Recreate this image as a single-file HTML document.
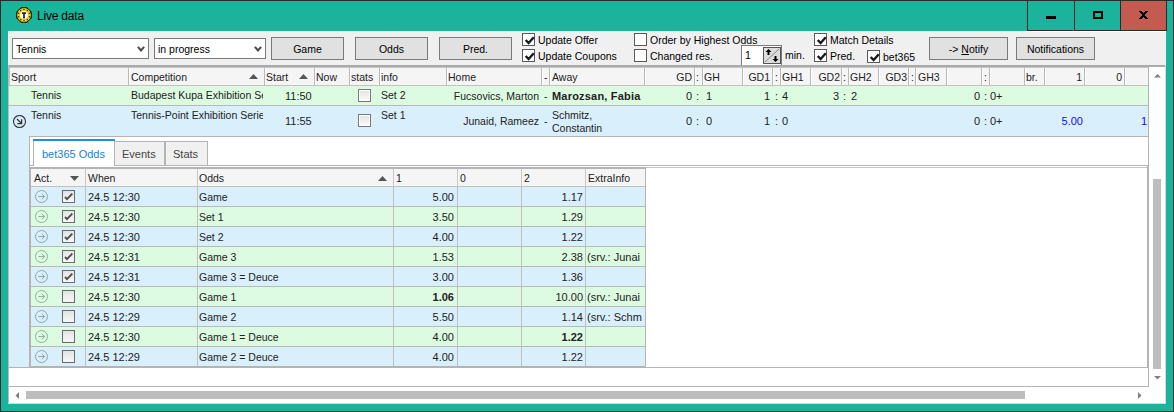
<!DOCTYPE html>
<html><head><meta charset="utf-8"><style>
html,body{margin:0;padding:0;width:1174px;height:412px;overflow:hidden;background:#2b2b2b}
.a{position:absolute}
.t{position:absolute;font-family:"Liberation Sans",sans-serif;white-space:nowrap;line-height:12px;color:#333}
u{text-decoration:underline}
</style></head><body>
<div class="a" style="left:0px;top:0px;width:1174px;height:412px;background:#2b2b2b"></div>
<div class="a" style="left:1px;top:1px;width:1172px;height:410px;background:#1bb39b"></div>
<svg class="a" style="left:16px;top:7px" width="16" height="16" viewBox="0 0 16 16">
<path d="M5 0.2H11L15.8 5V11L11 15.8H5L0.2 11V5z" fill="#111"/>
<circle cx="8" cy="8" r="6.9" fill="#f0cc00"/>
<circle cx="13.35" cy="9.65" r="0.75" fill="#3a3000"/><circle cx="11.36" cy="12.48" r="0.75" fill="#3a3000"/><circle cx="8.08" cy="13.60" r="0.75" fill="#3a3000"/><circle cx="4.77" cy="12.58" r="0.75" fill="#3a3000"/><circle cx="2.70" cy="9.81" r="0.75" fill="#3a3000"/><circle cx="2.65" cy="6.35" r="0.75" fill="#3a3000"/><circle cx="4.64" cy="3.52" r="0.75" fill="#3a3000"/><circle cx="7.92" cy="2.40" r="0.75" fill="#3a3000"/><circle cx="11.23" cy="3.42" r="0.75" fill="#3a3000"/><circle cx="13.30" cy="6.19" r="0.75" fill="#3a3000"/>
<circle cx="8" cy="8" r="3.9" fill="#fff"/>
<path d="M5.9 5.3h4.2v1.8h-1.2v4.4h-1.8v-4.4h-1.2z" fill="#2a2a2a"/>
</svg>
<div class="t" style="left:37px;top:10px;font-size:12px;color:#000;letter-spacing:-0.2px">Live data</div>
<div class="a" style="left:1027px;top:1px;width:46px;height:29px;border-left:1px solid #2b2b2b;border-bottom:1px solid #2b2b2b;box-sizing:border-box;height:30px"></div>
<div class="a" style="left:1074px;top:1px;width:46px;height:29px;border-left:1px solid #2b2b2b;border-bottom:1px solid #2b2b2b;box-sizing:border-box;height:30px"></div>
<div class="a" style="left:1120px;top:1px;width:47px;height:30px;background:#c35b51;border-left:1px solid #2b2b2b;border-right:1px solid #2b2b2b;border-bottom:1px solid #2b2b2b;box-sizing:border-box"></div>
<div class="a" style="left:1046px;top:16px;width:10px;height:3px;background:#000"></div>
<div class="a" style="left:1093px;top:11px;width:10px;height:8px;border:2px solid #000;box-sizing:border-box"></div>
<svg class="a" style="left:1139px;top:11px" width="9" height="8" viewBox="0 0 9 8" shape-rendering="crispEdges" fill="#000"><rect x="0" y="0" width="3" height="1"/><rect x="6" y="0" width="3" height="1"/><rect x="1" y="1" width="3" height="1"/><rect x="5" y="1" width="3" height="1"/><rect x="2" y="2" width="5" height="1"/><rect x="3" y="3" width="3" height="1"/><rect x="3" y="4" width="3" height="1"/><rect x="2" y="5" width="5" height="1"/><rect x="1" y="6" width="3" height="1"/><rect x="5" y="6" width="3" height="1"/><rect x="0" y="7" width="3" height="1"/><rect x="6" y="7" width="3" height="1"/></svg>
<div class="a" style="left:8px;top:31px;width:1158px;height:373px;background:#f0f0f0;border-left:1px solid #fff;border-top:1px solid #fff;box-sizing:border-box"></div>
<div class="a" style="left:12px;top:38px;width:137px;height:21px;background:#fff;border:1px solid #7a7a7a;box-sizing:border-box"></div>
<div class="t" style="left:16px;top:43px;font-size:10.5px;color:#000">Tennis</div>
<svg class="a" style="left:137px;top:46px" width="8" height="6" viewBox="0 0 8 6"><path d="M0.9 0.9L4 4.5L7.1 0.9" fill="none" stroke="#4a4a4a" stroke-width="2"/></svg>
<div class="a" style="left:154px;top:38px;width:112px;height:21px;background:#fff;border:1px solid #7a7a7a;box-sizing:border-box"></div>
<div class="t" style="left:158px;top:43px;font-size:10.5px;color:#000">in progress</div>
<svg class="a" style="left:254px;top:46px" width="8" height="6" viewBox="0 0 8 6"><path d="M0.9 0.9L4 4.5L7.1 0.9" fill="none" stroke="#4a4a4a" stroke-width="2"/></svg>
<div class="a" style="left:271px;top:37px;width:73px;height:23px;background:#e1e1e1;border:1px solid #7a7a7a;box-sizing:border-box"></div>
<div class="t" style="left:271px;width:73px;top:43px;font-size:10.5px;text-align:center;color:#000">Game</div>
<div class="a" style="left:355px;top:37px;width:73px;height:23px;background:#e1e1e1;border:1px solid #7a7a7a;box-sizing:border-box"></div>
<div class="t" style="left:355px;width:73px;top:43px;font-size:10.5px;text-align:center;color:#000">Odds</div>
<div class="a" style="left:439px;top:37px;width:73px;height:23px;background:#e1e1e1;border:1px solid #7a7a7a;box-sizing:border-box"></div>
<div class="t" style="left:439px;width:73px;top:43px;font-size:10.5px;text-align:center;color:#000">Pred.</div>
<div class="a" style="left:929px;top:37px;width:79px;height:23px;background:#e1e1e1;border:1px solid #7a7a7a;box-sizing:border-box"></div>
<div class="t" style="left:929px;width:79px;top:43px;font-size:10.5px;text-align:center;color:#000">-&gt; <u>N</u>otify</div>
<div class="a" style="left:1016px;top:37px;width:79px;height:23px;background:#e1e1e1;border:1px solid #7a7a7a;box-sizing:border-box"></div>
<div class="t" style="left:1016px;width:79px;top:43px;font-size:10.5px;text-align:center;color:#000">Notifications</div>
<div class="a" style="left:522px;top:33px;width:13px;height:13px;background:#fff;border:1px solid #5a5a5a;box-sizing:border-box"><svg width="13" height="13" viewBox="0 0 13 13" style="position:absolute;left:0;top:0"><path d="M2.7 6L5.6 9L10.8 3.3" fill="none" stroke="#1a1a1a" stroke-width="2.4"/></svg></div>
<div class="t" style="left:538px;top:34px;font-size:10.5px;color:#000">Update Offer</div>
<div class="a" style="left:522px;top:49px;width:13px;height:13px;background:#fff;border:1px solid #5a5a5a;box-sizing:border-box"><svg width="13" height="13" viewBox="0 0 13 13" style="position:absolute;left:0;top:0"><path d="M2.7 6L5.6 9L10.8 3.3" fill="none" stroke="#1a1a1a" stroke-width="2.4"/></svg></div>
<div class="t" style="left:538px;top:50px;font-size:10.5px;color:#000">Update Coupons</div>
<div class="a" style="left:634px;top:33px;width:13px;height:13px;background:#fff;border:1px solid #5a5a5a;box-sizing:border-box"></div>
<div class="t" style="left:650px;top:34px;font-size:10.5px;color:#000">Order by Highest Odds</div>
<div class="a" style="left:634px;top:49px;width:13px;height:13px;background:#fff;border:1px solid #5a5a5a;box-sizing:border-box"></div>
<div class="t" style="left:650px;top:50px;font-size:10.5px;color:#000">Changed res.</div>
<div class="a" style="left:814px;top:33px;width:13px;height:13px;background:#fff;border:1px solid #5a5a5a;box-sizing:border-box"><svg width="13" height="13" viewBox="0 0 13 13" style="position:absolute;left:0;top:0"><path d="M2.7 6L5.6 9L10.8 3.3" fill="none" stroke="#1a1a1a" stroke-width="2.4"/></svg></div>
<div class="t" style="left:830px;top:34px;font-size:10.5px;color:#000">Match Details</div>
<div class="a" style="left:814px;top:49px;width:13px;height:13px;background:#fff;border:1px solid #5a5a5a;box-sizing:border-box"><svg width="13" height="13" viewBox="0 0 13 13" style="position:absolute;left:0;top:0"><path d="M2.7 6L5.6 9L10.8 3.3" fill="none" stroke="#1a1a1a" stroke-width="2.4"/></svg></div>
<div class="t" style="left:830px;top:50px;font-size:10.5px;color:#000">Pred.</div>
<div class="a" style="left:867px;top:50px;width:13px;height:13px;background:#fff;border:1px solid #5a5a5a;box-sizing:border-box"><svg width="13" height="13" viewBox="0 0 13 13" style="position:absolute;left:0;top:0"><path d="M2.7 6L5.6 9L10.8 3.3" fill="none" stroke="#1a1a1a" stroke-width="2.4"/></svg></div>
<div class="t" style="left:883px;top:51px;font-size:10.5px;color:#000">bet365</div>
<div class="a" style="left:741px;top:45px;width:41px;height:21px;background:#fff;border:1px solid #7a7a7a;box-sizing:border-box"></div>
<div class="t" style="left:745px;top:49px;font-size:10.5px;color:#000">1</div>
<svg class="a" style="left:763px;top:47px" width="18" height="17" viewBox="0 0 18 17">
<rect x="0.5" y="0.5" width="17" height="16" fill="#dcdcdc" stroke="#555"/>
<path d="M2 15L16 2" stroke="#888" stroke-width="1"/>
<path d="M5.5 2L8.5 5H6.5V8H4.5V5H2.5z" fill="#000"/>
<path d="M12.5 15L9.5 12H11.5V9H13.5V12H15.5z" fill="#000"/>
</svg>
<div class="t" style="left:785px;top:49px;font-size:10.5px;color:#000">min.</div>
<div class="a" style="left:8px;top:65px;width:1158px;height:2px;background:#ababab"></div>
<div class="a" style="left:8px;top:65px;width:1px;height:339px;background:#c4baba"></div>
<div class="a" style="left:9px;top:67px;width:1157px;height:337px;background:#fff"></div>
<div class="a" style="left:9px;top:67px;width:1157px;height:1px;background:#c6c6c6"></div>
<div class="a" style="left:9px;top:68px;width:1140px;height:17px;background:#f5f5f5"></div>
<div class="a" style="left:9px;top:85px;width:1140px;height:1px;background:#c2c2c2"></div>
<div class="a" style="left:128px;top:68px;width:1px;height:17px;background:#b9b9b9"></div>
<div class="a" style="left:129px;top:68px;width:1px;height:17px;background:#fff"></div>
<div class="a" style="left:264px;top:68px;width:1px;height:17px;background:#b9b9b9"></div>
<div class="a" style="left:265px;top:68px;width:1px;height:17px;background:#fff"></div>
<div class="a" style="left:314px;top:68px;width:1px;height:17px;background:#b9b9b9"></div>
<div class="a" style="left:315px;top:68px;width:1px;height:17px;background:#fff"></div>
<div class="a" style="left:349px;top:68px;width:1px;height:17px;background:#b9b9b9"></div>
<div class="a" style="left:350px;top:68px;width:1px;height:17px;background:#fff"></div>
<div class="a" style="left:379px;top:68px;width:1px;height:17px;background:#b9b9b9"></div>
<div class="a" style="left:380px;top:68px;width:1px;height:17px;background:#fff"></div>
<div class="a" style="left:446px;top:68px;width:1px;height:17px;background:#b9b9b9"></div>
<div class="a" style="left:447px;top:68px;width:1px;height:17px;background:#fff"></div>
<div class="a" style="left:541px;top:68px;width:1px;height:17px;background:#b9b9b9"></div>
<div class="a" style="left:542px;top:68px;width:1px;height:17px;background:#fff"></div>
<div class="a" style="left:549px;top:68px;width:1px;height:17px;background:#b9b9b9"></div>
<div class="a" style="left:550px;top:68px;width:1px;height:17px;background:#fff"></div>
<div class="a" style="left:644px;top:68px;width:1px;height:17px;background:#b9b9b9"></div>
<div class="a" style="left:645px;top:68px;width:1px;height:17px;background:#fff"></div>
<div class="a" style="left:694px;top:68px;width:1px;height:17px;background:#b9b9b9"></div>
<div class="a" style="left:695px;top:68px;width:1px;height:17px;background:#fff"></div>
<div class="a" style="left:702px;top:68px;width:1px;height:17px;background:#b9b9b9"></div>
<div class="a" style="left:703px;top:68px;width:1px;height:17px;background:#fff"></div>
<div class="a" style="left:742px;top:68px;width:1px;height:17px;background:#b9b9b9"></div>
<div class="a" style="left:743px;top:68px;width:1px;height:17px;background:#fff"></div>
<div class="a" style="left:772px;top:68px;width:1px;height:17px;background:#b9b9b9"></div>
<div class="a" style="left:773px;top:68px;width:1px;height:17px;background:#fff"></div>
<div class="a" style="left:780px;top:68px;width:1px;height:17px;background:#b9b9b9"></div>
<div class="a" style="left:781px;top:68px;width:1px;height:17px;background:#fff"></div>
<div class="a" style="left:810px;top:68px;width:1px;height:17px;background:#b9b9b9"></div>
<div class="a" style="left:811px;top:68px;width:1px;height:17px;background:#fff"></div>
<div class="a" style="left:841px;top:68px;width:1px;height:17px;background:#b9b9b9"></div>
<div class="a" style="left:842px;top:68px;width:1px;height:17px;background:#fff"></div>
<div class="a" style="left:848px;top:68px;width:1px;height:17px;background:#b9b9b9"></div>
<div class="a" style="left:849px;top:68px;width:1px;height:17px;background:#fff"></div>
<div class="a" style="left:878px;top:68px;width:1px;height:17px;background:#b9b9b9"></div>
<div class="a" style="left:879px;top:68px;width:1px;height:17px;background:#fff"></div>
<div class="a" style="left:908px;top:68px;width:1px;height:17px;background:#b9b9b9"></div>
<div class="a" style="left:909px;top:68px;width:1px;height:17px;background:#fff"></div>
<div class="a" style="left:915px;top:68px;width:1px;height:17px;background:#b9b9b9"></div>
<div class="a" style="left:916px;top:68px;width:1px;height:17px;background:#fff"></div>
<div class="a" style="left:946px;top:68px;width:1px;height:17px;background:#b9b9b9"></div>
<div class="a" style="left:947px;top:68px;width:1px;height:17px;background:#fff"></div>
<div class="a" style="left:981px;top:68px;width:1px;height:17px;background:#b9b9b9"></div>
<div class="a" style="left:982px;top:68px;width:1px;height:17px;background:#fff"></div>
<div class="a" style="left:989px;top:68px;width:1px;height:17px;background:#b9b9b9"></div>
<div class="a" style="left:990px;top:68px;width:1px;height:17px;background:#fff"></div>
<div class="a" style="left:1024px;top:68px;width:1px;height:17px;background:#b9b9b9"></div>
<div class="a" style="left:1025px;top:68px;width:1px;height:17px;background:#fff"></div>
<div class="a" style="left:1044px;top:68px;width:1px;height:17px;background:#b9b9b9"></div>
<div class="a" style="left:1045px;top:68px;width:1px;height:17px;background:#fff"></div>
<div class="a" style="left:1084px;top:68px;width:1px;height:17px;background:#b9b9b9"></div>
<div class="a" style="left:1085px;top:68px;width:1px;height:17px;background:#fff"></div>
<div class="a" style="left:1124px;top:68px;width:1px;height:17px;background:#b9b9b9"></div>
<div class="a" style="left:1125px;top:68px;width:1px;height:17px;background:#fff"></div>
<div class="a" style="left:1148px;top:68px;width:1px;height:18px;background:#b9b9b9"></div>
<div class="t" style="left:11px;top:71px;font-size:10.5px;color:#222">Sport</div>
<div class="a" style="left:9px;top:67px;width:1px;height:19px;background:#c4c4c4"></div>
<div class="t" style="left:131px;top:71px;font-size:10.5px;color:#222">Competition</div>
<div class="t" style="left:266px;top:71px;font-size:10.5px;color:#222">Start</div>
<div class="t" style="left:316px;top:71px;font-size:10.5px;color:#222">Now</div>
<div class="t" style="left:351px;top:71px;font-size:10.5px;color:#222">stats</div>
<div class="t" style="left:381px;top:71px;font-size:10.5px;color:#222">info</div>
<div class="t" style="left:448px;top:71px;font-size:10.5px;color:#222">Home</div>
<div class="t" style="left:544px;top:71px;font-size:10.5px;color:#222">-</div>
<div class="t" style="left:552px;top:71px;font-size:10.5px;color:#222">Away</div>
<div class="t" style="right:482px;top:71px;font-size:10.5px;text-align:right;color:#222">GD</div>
<div class="t" style="left:696px;top:71px;font-size:10.5px;color:#222">:</div>
<div class="t" style="left:704px;top:71px;font-size:10.5px;color:#222">GH</div>
<div class="t" style="right:404px;top:71px;font-size:10.5px;text-align:right;color:#222">GD1</div>
<div class="t" style="left:775px;top:71px;font-size:10.5px;color:#222">:</div>
<div class="t" style="left:782px;top:71px;font-size:10.5px;color:#222">GH1</div>
<div class="t" style="right:334px;top:71px;font-size:10.5px;text-align:right;color:#222">GD2</div>
<div class="t" style="left:843px;top:71px;font-size:10.5px;color:#222">:</div>
<div class="t" style="left:850px;top:71px;font-size:10.5px;color:#222">GH2</div>
<div class="t" style="right:267px;top:71px;font-size:10.5px;text-align:right;color:#222">GD3</div>
<div class="t" style="left:911px;top:71px;font-size:10.5px;color:#222">:</div>
<div class="t" style="left:918px;top:71px;font-size:10.5px;color:#222">GH3</div>
<div class="t" style="left:984px;top:71px;font-size:10.5px;color:#222">:</div>
<div class="t" style="left:1026px;top:71px;font-size:10.5px;color:#222">br.</div>
<div class="t" style="right:92px;top:71px;font-size:10.5px;text-align:right;color:#222">1</div>
<div class="t" style="right:52px;top:71px;font-size:10.5px;text-align:right;color:#222">0</div>
<svg class="a" style="left:249px;top:74px" width="9" height="5" viewBox="0 0 9 5"><path d="M0 5L4.5 0L9 5z" fill="#555"/></svg>
<svg class="a" style="left:299px;top:74px" width="9" height="5" viewBox="0 0 9 5"><path d="M0 5L4.5 0L9 5z" fill="#555"/></svg>
<div class="a" style="left:9px;top:86px;width:1140px;height:19px;background:#dcfbe1"></div>
<div class="a" style="left:9px;top:105px;width:1140px;height:1px;background:#b9b9b9"></div>
<div class="a" style="left:9px;top:106px;width:1140px;height:30px;background:#d9f0fc"></div>
<div class="a" style="left:29px;top:136px;width:1120px;height:1px;background:#b4b4b4"></div>
<div class="a" style="left:9px;top:136px;width:20px;height:231px;background:#d9f0fc"></div>
<div class="a" style="left:1148px;top:67px;width:1px;height:320px;background:#b4b4b4"></div>
<div class="a" style="left:9px;top:386px;width:1140px;height:1px;background:#b4b4b4"></div>
<div class="t" style="left:31px;top:89px;font-size:10.5px;color:#222">Tennis</div>
<div class="t" style="left:131px;top:89px;width:132px;overflow:hidden;font-size:10.5px;color:#222">Budapest Kupa Exhibition Series</div>
<div class="t" style="left:285px;top:90px;font-size:11px;color:#222">11:50</div>
<div class="t" style="left:381px;top:89px;font-size:10.5px;color:#222">Set 2</div>
<div class="t" style="right:635px;top:90px;font-size:10.5px;text-align:right;color:#222">Fucsovics, Marton</div>
<div class="t" style="left:544px;top:90px;font-size:10.5px;color:#222">-</div>
<div class="t" style="left:552px;top:90px;width:91px;overflow:hidden;font-size:11px;color:#222;font-weight:bold;letter-spacing:0.2px">Marozsan, Fabia</div>
<div class="t" style="right:482px;top:90px;font-size:11px;text-align:right;color:#222">0</div>
<div class="t" style="left:696px;top:90px;font-size:11px;color:#222">:</div>
<div class="t" style="left:706px;top:90px;font-size:11px;color:#222">1</div>
<div class="t" style="right:404px;top:90px;font-size:11px;text-align:right;color:#222">1</div>
<div class="t" style="left:775px;top:90px;font-size:11px;color:#222">:</div>
<div class="t" style="left:782px;top:90px;font-size:11px;color:#222">4</div>
<div class="t" style="right:335px;top:90px;font-size:11px;text-align:right;color:#222">3</div>
<div class="t" style="left:843px;top:90px;font-size:11px;color:#222">:</div>
<div class="t" style="left:851px;top:90px;font-size:11px;color:#222">2</div>
<div class="t" style="right:194px;top:90px;font-size:11px;text-align:right;color:#222">0</div>
<div class="t" style="left:984px;top:90px;font-size:11px;color:#222">:</div>
<div class="t" style="left:990px;top:90px;font-size:11px;color:#222">0+</div>
<div class="t" style="left:31px;top:109px;font-size:10.5px;color:#222">Tennis</div>
<div class="t" style="left:131px;top:109px;width:132px;overflow:hidden;font-size:10.5px;color:#222">Tennis-Point Exhibition Series</div>
<div class="t" style="left:285px;top:115px;font-size:11px;color:#222">11:55</div>
<div class="t" style="left:381px;top:109px;font-size:10.5px;color:#222">Set 1</div>
<div class="t" style="right:635px;top:115px;font-size:10.5px;text-align:right;color:#222">Junaid, Rameez</div>
<div class="t" style="left:544px;top:115px;font-size:10.5px;color:#222">-</div>
<div class="t" style="left:552px;top:109px;font-size:10.5px;color:#222">Schmitz,</div>
<div class="t" style="left:552px;top:122px;font-size:10.5px;color:#222">Constantin</div>
<div class="t" style="right:482px;top:115px;font-size:11px;text-align:right;color:#222">0</div>
<div class="t" style="left:696px;top:115px;font-size:11px;color:#222">:</div>
<div class="t" style="left:706px;top:115px;font-size:11px;color:#222">0</div>
<div class="t" style="right:404px;top:115px;font-size:11px;text-align:right;color:#222">1</div>
<div class="t" style="left:775px;top:115px;font-size:11px;color:#222">:</div>
<div class="t" style="left:782px;top:115px;font-size:11px;color:#222">0</div>
<div class="t" style="right:194px;top:115px;font-size:11px;text-align:right;color:#222">0</div>
<div class="t" style="left:984px;top:115px;font-size:11px;color:#222">:</div>
<div class="t" style="left:990px;top:115px;font-size:11px;color:#222">0+</div>
<div class="t" style="right:91px;top:115px;font-size:11px;text-align:right;color:#1010e0">5.00</div>
<div class="t" style="left:1141px;top:115px;width:7px;overflow:hidden;font-size:11px;color:#1010e0">1.17</div>
<div class="a" style="left:358px;top:89px;width:13px;height:13px;border:1px solid #787878;box-sizing:border-box;background:linear-gradient(#e2e2e2,#fcfcfc);box-shadow:inset 0 0 0 1px #fff"></div>
<div class="a" style="left:358px;top:114px;width:13px;height:13px;border:1px solid #787878;box-sizing:border-box;background:linear-gradient(#e2e2e2,#fcfcfc);box-shadow:inset 0 0 0 1px #fff"></div>
<svg class="a" style="left:13px;top:115px" width="14" height="14" viewBox="0 0 14 14">
<circle cx="6.5" cy="6.5" r="6" fill="none" stroke="#333" stroke-width="1.1"/>
<path d="M4 4L8.6 8.6M4.3 8.6H8.6V4.3" fill="none" stroke="#333" stroke-width="1.3"/>
</svg>
<div class="a" style="left:29px;top:136px;width:1px;height:231px;background:#b4b4b4"></div>
<div class="a" style="left:30px;top:137px;width:1118px;height:230px;background:#fff"></div>
<div class="a" style="left:29px;top:165px;width:5px;height:1px;background:#b4b4b4"></div>
<div class="a" style="left:33px;top:139px;width:82px;height:27px;background:#fff;border-left:1px solid #b4b4b4;border-right:1px solid #b4b4b4;box-sizing:border-box"></div>
<div class="a" style="left:33px;top:139px;width:82px;height:2px;background:#1e8fe6"></div>
<div class="t" style="left:42px;top:148px;font-size:11px;color:#1682d8">bet365 Odds</div>
<div class="a" style="left:114px;top:141px;width:51px;height:25px;background:#f0f0f0;border:1px solid #b4b4b4;box-sizing:border-box"></div>
<div class="a" style="left:165px;top:141px;width:43px;height:25px;background:#f0f0f0;border:1px solid #b4b4b4;box-sizing:border-box"></div>
<div class="t" style="left:122px;top:148px;font-size:11px;color:#444">Events</div>
<div class="t" style="left:173px;top:148px;font-size:11px;color:#444">Stats</div>
<div class="a" style="left:114px;top:165px;width:1034px;height:1px;background:#b4b4b4"></div>
<div class="a" style="left:1147px;top:165px;width:1px;height:202px;background:#b4b4b4"></div>
<div class="a" style="left:9px;top:367px;width:1140px;height:1px;background:#b4b4b4"></div>
<div class="a" style="left:30px;top:167px;width:1117px;height:1px;background:#c4c4c4"></div>
<div class="a" style="left:30px;top:167px;width:616px;height:2px;background:#b4b4b4"></div>
<div class="a" style="left:30px;top:167px;width:1px;height:200px;background:#b4b4b4"></div>
<div class="a" style="left:645px;top:167px;width:1px;height:200px;background:#b4b4b4"></div>
<div class="a" style="left:31px;top:169px;width:614px;height:17px;background:#f5f5f5"></div>
<div class="a" style="left:31px;top:186px;width:614px;height:1px;background:#c0c0c0"></div>
<div class="a" style="left:85px;top:169px;width:1px;height:198px;background:#c8c8c8"></div>
<div class="a" style="left:197px;top:169px;width:1px;height:198px;background:#c8c8c8"></div>
<div class="a" style="left:393px;top:169px;width:1px;height:198px;background:#c8c8c8"></div>
<div class="a" style="left:457px;top:169px;width:1px;height:198px;background:#c8c8c8"></div>
<div class="a" style="left:521px;top:169px;width:1px;height:198px;background:#c8c8c8"></div>
<div class="a" style="left:585px;top:169px;width:1px;height:198px;background:#c8c8c8"></div>
<div class="t" style="left:34px;top:172px;font-size:10.5px;color:#222">Act.</div>
<svg class="a" style="left:70px;top:176px" width="9" height="5" viewBox="0 0 9 5"><path d="M0 0L4.5 5L9 0z" fill="#555"/></svg>
<div class="t" style="left:88px;top:172px;font-size:10.5px;color:#222">When</div>
<div class="t" style="left:199px;top:172px;font-size:10.5px;color:#222">Odds</div>
<svg class="a" style="left:378px;top:176px" width="9" height="5" viewBox="0 0 9 5"><path d="M0 5L4.5 0L9 5z" fill="#555"/></svg>
<div class="t" style="left:396px;top:172px;font-size:10.5px;color:#222">1</div>
<div class="t" style="left:460px;top:172px;font-size:10.5px;color:#222">0</div>
<div class="t" style="left:524px;top:172px;font-size:10.5px;color:#222">2</div>
<div class="t" style="left:588px;top:172px;font-size:10.5px;color:#222">ExtraInfo</div>
<div class="a" style="left:31px;top:187px;width:614px;height:19px;background:#d9f0fc"></div>
<div class="a" style="left:31px;top:206px;width:614px;height:1px;background:#b9b9b9"></div>
<div class="a" style="left:85px;top:187px;width:1px;height:19px;background:#c0c0c0"></div>
<div class="a" style="left:197px;top:187px;width:1px;height:19px;background:#c0c0c0"></div>
<div class="a" style="left:393px;top:187px;width:1px;height:19px;background:#c0c0c0"></div>
<div class="a" style="left:457px;top:187px;width:1px;height:19px;background:#c0c0c0"></div>
<div class="a" style="left:521px;top:187px;width:1px;height:19px;background:#c0c0c0"></div>
<div class="a" style="left:585px;top:187px;width:1px;height:19px;background:#c0c0c0"></div>
<svg class="a" style="left:35px;top:190px" width="14" height="14" viewBox="0 0 14 14">
<circle cx="6.5" cy="6.5" r="6" fill="none" stroke="#8fa3aa" stroke-width="1"/>
<path d="M3.3 6.5H9.6M6.8 3.7L9.6 6.5L6.8 9.3" fill="none" stroke="#8fa3aa" stroke-width="1"/>
</svg>
<div class="a" style="left:62px;top:190px;width:13px;height:13px;border:1px solid #6a6a6a;box-sizing:border-box;background:linear-gradient(#e3e3e3,#f7f7f7)"><svg width="13" height="13" viewBox="0 0 13 13" style="position:absolute;left:-1px;top:-1px"><path d="M3 7L5 9.1L10.3 3.6" fill="none" stroke="#4e4e4e" stroke-width="1.9"/></svg></div>
<div class="t" style="left:88px;top:191px;font-size:11px;color:#222">24.5 12:30</div>
<div class="t" style="left:199px;top:191px;font-size:10.5px;color:#222">Game</div>
<div class="t" style="right:720px;top:191px;font-size:11px;text-align:right;color:#222">5.00</div>
<div class="t" style="right:591px;top:191px;font-size:11px;text-align:right;color:#222">1.17</div>
<div class="a" style="left:31px;top:207px;width:614px;height:19px;background:#dcfbe1"></div>
<div class="a" style="left:31px;top:226px;width:614px;height:1px;background:#b9b9b9"></div>
<div class="a" style="left:85px;top:207px;width:1px;height:19px;background:#c0c0c0"></div>
<div class="a" style="left:197px;top:207px;width:1px;height:19px;background:#c0c0c0"></div>
<div class="a" style="left:393px;top:207px;width:1px;height:19px;background:#c0c0c0"></div>
<div class="a" style="left:457px;top:207px;width:1px;height:19px;background:#c0c0c0"></div>
<div class="a" style="left:521px;top:207px;width:1px;height:19px;background:#c0c0c0"></div>
<div class="a" style="left:585px;top:207px;width:1px;height:19px;background:#c0c0c0"></div>
<svg class="a" style="left:35px;top:210px" width="14" height="14" viewBox="0 0 14 14">
<circle cx="6.5" cy="6.5" r="6" fill="none" stroke="#8fae96" stroke-width="1"/>
<path d="M3.3 6.5H9.6M6.8 3.7L9.6 6.5L6.8 9.3" fill="none" stroke="#8fae96" stroke-width="1"/>
</svg>
<div class="a" style="left:62px;top:210px;width:13px;height:13px;border:1px solid #6a6a6a;box-sizing:border-box;background:linear-gradient(#e3e3e3,#f7f7f7)"><svg width="13" height="13" viewBox="0 0 13 13" style="position:absolute;left:-1px;top:-1px"><path d="M3 7L5 9.1L10.3 3.6" fill="none" stroke="#4e4e4e" stroke-width="1.9"/></svg></div>
<div class="t" style="left:88px;top:211px;font-size:11px;color:#222">24.5 12:30</div>
<div class="t" style="left:199px;top:211px;font-size:10.5px;color:#222">Set 1</div>
<div class="t" style="right:720px;top:211px;font-size:11px;text-align:right;color:#222">3.50</div>
<div class="t" style="right:591px;top:211px;font-size:11px;text-align:right;color:#222">1.29</div>
<div class="a" style="left:31px;top:227px;width:614px;height:19px;background:#d9f0fc"></div>
<div class="a" style="left:31px;top:246px;width:614px;height:1px;background:#b9b9b9"></div>
<div class="a" style="left:85px;top:227px;width:1px;height:19px;background:#c0c0c0"></div>
<div class="a" style="left:197px;top:227px;width:1px;height:19px;background:#c0c0c0"></div>
<div class="a" style="left:393px;top:227px;width:1px;height:19px;background:#c0c0c0"></div>
<div class="a" style="left:457px;top:227px;width:1px;height:19px;background:#c0c0c0"></div>
<div class="a" style="left:521px;top:227px;width:1px;height:19px;background:#c0c0c0"></div>
<div class="a" style="left:585px;top:227px;width:1px;height:19px;background:#c0c0c0"></div>
<svg class="a" style="left:35px;top:230px" width="14" height="14" viewBox="0 0 14 14">
<circle cx="6.5" cy="6.5" r="6" fill="none" stroke="#8fa3aa" stroke-width="1"/>
<path d="M3.3 6.5H9.6M6.8 3.7L9.6 6.5L6.8 9.3" fill="none" stroke="#8fa3aa" stroke-width="1"/>
</svg>
<div class="a" style="left:62px;top:230px;width:13px;height:13px;border:1px solid #6a6a6a;box-sizing:border-box;background:linear-gradient(#e3e3e3,#f7f7f7)"><svg width="13" height="13" viewBox="0 0 13 13" style="position:absolute;left:-1px;top:-1px"><path d="M3 7L5 9.1L10.3 3.6" fill="none" stroke="#4e4e4e" stroke-width="1.9"/></svg></div>
<div class="t" style="left:88px;top:231px;font-size:11px;color:#222">24.5 12:30</div>
<div class="t" style="left:199px;top:231px;font-size:10.5px;color:#222">Set 2</div>
<div class="t" style="right:720px;top:231px;font-size:11px;text-align:right;color:#222">4.00</div>
<div class="t" style="right:591px;top:231px;font-size:11px;text-align:right;color:#222">1.22</div>
<div class="a" style="left:31px;top:247px;width:614px;height:19px;background:#dcfbe1"></div>
<div class="a" style="left:31px;top:266px;width:614px;height:1px;background:#b9b9b9"></div>
<div class="a" style="left:85px;top:247px;width:1px;height:19px;background:#c0c0c0"></div>
<div class="a" style="left:197px;top:247px;width:1px;height:19px;background:#c0c0c0"></div>
<div class="a" style="left:393px;top:247px;width:1px;height:19px;background:#c0c0c0"></div>
<div class="a" style="left:457px;top:247px;width:1px;height:19px;background:#c0c0c0"></div>
<div class="a" style="left:521px;top:247px;width:1px;height:19px;background:#c0c0c0"></div>
<div class="a" style="left:585px;top:247px;width:1px;height:19px;background:#c0c0c0"></div>
<svg class="a" style="left:35px;top:250px" width="14" height="14" viewBox="0 0 14 14">
<circle cx="6.5" cy="6.5" r="6" fill="none" stroke="#8fae96" stroke-width="1"/>
<path d="M3.3 6.5H9.6M6.8 3.7L9.6 6.5L6.8 9.3" fill="none" stroke="#8fae96" stroke-width="1"/>
</svg>
<div class="a" style="left:62px;top:250px;width:13px;height:13px;border:1px solid #6a6a6a;box-sizing:border-box;background:linear-gradient(#e3e3e3,#f7f7f7)"><svg width="13" height="13" viewBox="0 0 13 13" style="position:absolute;left:-1px;top:-1px"><path d="M3 7L5 9.1L10.3 3.6" fill="none" stroke="#4e4e4e" stroke-width="1.9"/></svg></div>
<div class="t" style="left:88px;top:251px;font-size:11px;color:#222">24.5 12:31</div>
<div class="t" style="left:199px;top:251px;font-size:10.5px;color:#222">Game 3</div>
<div class="t" style="right:720px;top:251px;font-size:11px;text-align:right;color:#222">1.53</div>
<div class="t" style="right:591px;top:251px;font-size:11px;text-align:right;color:#222">2.38</div>
<div class="t" style="left:587px;top:251px;width:58px;overflow:hidden;font-size:11px;color:#222">(srv.: Junai</div>
<div class="a" style="left:31px;top:267px;width:614px;height:19px;background:#d9f0fc"></div>
<div class="a" style="left:31px;top:286px;width:614px;height:1px;background:#b9b9b9"></div>
<div class="a" style="left:85px;top:267px;width:1px;height:19px;background:#c0c0c0"></div>
<div class="a" style="left:197px;top:267px;width:1px;height:19px;background:#c0c0c0"></div>
<div class="a" style="left:393px;top:267px;width:1px;height:19px;background:#c0c0c0"></div>
<div class="a" style="left:457px;top:267px;width:1px;height:19px;background:#c0c0c0"></div>
<div class="a" style="left:521px;top:267px;width:1px;height:19px;background:#c0c0c0"></div>
<div class="a" style="left:585px;top:267px;width:1px;height:19px;background:#c0c0c0"></div>
<svg class="a" style="left:35px;top:270px" width="14" height="14" viewBox="0 0 14 14">
<circle cx="6.5" cy="6.5" r="6" fill="none" stroke="#8fa3aa" stroke-width="1"/>
<path d="M3.3 6.5H9.6M6.8 3.7L9.6 6.5L6.8 9.3" fill="none" stroke="#8fa3aa" stroke-width="1"/>
</svg>
<div class="a" style="left:62px;top:270px;width:13px;height:13px;border:1px solid #6a6a6a;box-sizing:border-box;background:linear-gradient(#e3e3e3,#f7f7f7)"><svg width="13" height="13" viewBox="0 0 13 13" style="position:absolute;left:-1px;top:-1px"><path d="M3 7L5 9.1L10.3 3.6" fill="none" stroke="#4e4e4e" stroke-width="1.9"/></svg></div>
<div class="t" style="left:88px;top:271px;font-size:11px;color:#222">24.5 12:31</div>
<div class="t" style="left:199px;top:271px;font-size:10.5px;color:#222">Game 3 = Deuce</div>
<div class="t" style="right:720px;top:271px;font-size:11px;text-align:right;color:#222">3.00</div>
<div class="t" style="right:591px;top:271px;font-size:11px;text-align:right;color:#222">1.36</div>
<div class="a" style="left:31px;top:287px;width:614px;height:19px;background:#dcfbe1"></div>
<div class="a" style="left:31px;top:306px;width:614px;height:1px;background:#b9b9b9"></div>
<div class="a" style="left:85px;top:287px;width:1px;height:19px;background:#c0c0c0"></div>
<div class="a" style="left:197px;top:287px;width:1px;height:19px;background:#c0c0c0"></div>
<div class="a" style="left:393px;top:287px;width:1px;height:19px;background:#c0c0c0"></div>
<div class="a" style="left:457px;top:287px;width:1px;height:19px;background:#c0c0c0"></div>
<div class="a" style="left:521px;top:287px;width:1px;height:19px;background:#c0c0c0"></div>
<div class="a" style="left:585px;top:287px;width:1px;height:19px;background:#c0c0c0"></div>
<svg class="a" style="left:35px;top:290px" width="14" height="14" viewBox="0 0 14 14">
<circle cx="6.5" cy="6.5" r="6" fill="none" stroke="#8fae96" stroke-width="1"/>
<path d="M3.3 6.5H9.6M6.8 3.7L9.6 6.5L6.8 9.3" fill="none" stroke="#8fae96" stroke-width="1"/>
</svg>
<div class="a" style="left:62px;top:290px;width:13px;height:13px;border:1px solid #6a6a6a;box-sizing:border-box;background:linear-gradient(#e3e3e3,#f7f7f7)"></div>
<div class="t" style="left:88px;top:291px;font-size:11px;color:#222">24.5 12:30</div>
<div class="t" style="left:199px;top:291px;font-size:10.5px;color:#222">Game 1</div>
<div class="t" style="right:720px;top:291px;font-size:11px;text-align:right;color:#222;font-weight:bold">1.06</div>
<div class="t" style="right:591px;top:291px;font-size:11px;text-align:right;color:#222">10.00</div>
<div class="t" style="left:587px;top:291px;width:58px;overflow:hidden;font-size:11px;color:#222">(srv.: Junai</div>
<div class="a" style="left:31px;top:307px;width:614px;height:19px;background:#d9f0fc"></div>
<div class="a" style="left:31px;top:326px;width:614px;height:1px;background:#b9b9b9"></div>
<div class="a" style="left:85px;top:307px;width:1px;height:19px;background:#c0c0c0"></div>
<div class="a" style="left:197px;top:307px;width:1px;height:19px;background:#c0c0c0"></div>
<div class="a" style="left:393px;top:307px;width:1px;height:19px;background:#c0c0c0"></div>
<div class="a" style="left:457px;top:307px;width:1px;height:19px;background:#c0c0c0"></div>
<div class="a" style="left:521px;top:307px;width:1px;height:19px;background:#c0c0c0"></div>
<div class="a" style="left:585px;top:307px;width:1px;height:19px;background:#c0c0c0"></div>
<svg class="a" style="left:35px;top:310px" width="14" height="14" viewBox="0 0 14 14">
<circle cx="6.5" cy="6.5" r="6" fill="none" stroke="#8fa3aa" stroke-width="1"/>
<path d="M3.3 6.5H9.6M6.8 3.7L9.6 6.5L6.8 9.3" fill="none" stroke="#8fa3aa" stroke-width="1"/>
</svg>
<div class="a" style="left:62px;top:310px;width:13px;height:13px;border:1px solid #6a6a6a;box-sizing:border-box;background:linear-gradient(#e3e3e3,#f7f7f7)"></div>
<div class="t" style="left:88px;top:311px;font-size:11px;color:#222">24.5 12:29</div>
<div class="t" style="left:199px;top:311px;font-size:10.5px;color:#222">Game 2</div>
<div class="t" style="right:720px;top:311px;font-size:11px;text-align:right;color:#222">5.50</div>
<div class="t" style="right:591px;top:311px;font-size:11px;text-align:right;color:#222">1.14</div>
<div class="t" style="left:587px;top:311px;width:58px;overflow:hidden;font-size:11px;color:#222">(srv.: Schm</div>
<div class="a" style="left:31px;top:327px;width:614px;height:19px;background:#dcfbe1"></div>
<div class="a" style="left:31px;top:346px;width:614px;height:1px;background:#b9b9b9"></div>
<div class="a" style="left:85px;top:327px;width:1px;height:19px;background:#c0c0c0"></div>
<div class="a" style="left:197px;top:327px;width:1px;height:19px;background:#c0c0c0"></div>
<div class="a" style="left:393px;top:327px;width:1px;height:19px;background:#c0c0c0"></div>
<div class="a" style="left:457px;top:327px;width:1px;height:19px;background:#c0c0c0"></div>
<div class="a" style="left:521px;top:327px;width:1px;height:19px;background:#c0c0c0"></div>
<div class="a" style="left:585px;top:327px;width:1px;height:19px;background:#c0c0c0"></div>
<svg class="a" style="left:35px;top:330px" width="14" height="14" viewBox="0 0 14 14">
<circle cx="6.5" cy="6.5" r="6" fill="none" stroke="#8fae96" stroke-width="1"/>
<path d="M3.3 6.5H9.6M6.8 3.7L9.6 6.5L6.8 9.3" fill="none" stroke="#8fae96" stroke-width="1"/>
</svg>
<div class="a" style="left:62px;top:330px;width:13px;height:13px;border:1px solid #6a6a6a;box-sizing:border-box;background:linear-gradient(#e3e3e3,#f7f7f7)"></div>
<div class="t" style="left:88px;top:331px;font-size:11px;color:#222">24.5 12:30</div>
<div class="t" style="left:199px;top:331px;font-size:10.5px;color:#222">Game 1 = Deuce</div>
<div class="t" style="right:720px;top:331px;font-size:11px;text-align:right;color:#222">4.00</div>
<div class="t" style="right:591px;top:331px;font-size:11px;text-align:right;color:#222;font-weight:bold">1.22</div>
<div class="a" style="left:31px;top:347px;width:614px;height:19px;background:#d9f0fc"></div>
<div class="a" style="left:31px;top:366px;width:614px;height:1px;background:#b9b9b9"></div>
<div class="a" style="left:85px;top:347px;width:1px;height:19px;background:#c0c0c0"></div>
<div class="a" style="left:197px;top:347px;width:1px;height:19px;background:#c0c0c0"></div>
<div class="a" style="left:393px;top:347px;width:1px;height:19px;background:#c0c0c0"></div>
<div class="a" style="left:457px;top:347px;width:1px;height:19px;background:#c0c0c0"></div>
<div class="a" style="left:521px;top:347px;width:1px;height:19px;background:#c0c0c0"></div>
<div class="a" style="left:585px;top:347px;width:1px;height:19px;background:#c0c0c0"></div>
<svg class="a" style="left:35px;top:350px" width="14" height="14" viewBox="0 0 14 14">
<circle cx="6.5" cy="6.5" r="6" fill="none" stroke="#8fa3aa" stroke-width="1"/>
<path d="M3.3 6.5H9.6M6.8 3.7L9.6 6.5L6.8 9.3" fill="none" stroke="#8fa3aa" stroke-width="1"/>
</svg>
<div class="a" style="left:62px;top:350px;width:13px;height:13px;border:1px solid #6a6a6a;box-sizing:border-box;background:linear-gradient(#e3e3e3,#f7f7f7)"></div>
<div class="t" style="left:88px;top:351px;font-size:11px;color:#222">24.5 12:29</div>
<div class="t" style="left:199px;top:351px;font-size:10.5px;color:#222">Game 2 = Deuce</div>
<div class="t" style="right:720px;top:351px;font-size:11px;text-align:right;color:#222">4.00</div>
<div class="t" style="right:591px;top:351px;font-size:11px;text-align:right;color:#222">1.22</div>
<div class="a" style="left:29px;top:366px;width:617px;height:1px;background:#b4b4b4"></div>
<div class="a" style="left:1149px;top:67px;width:17px;height:337px;background:#fff"></div>
<div class="a" style="left:9px;top:387px;width:1140px;height:17px;background:#fff"></div>
<div class="a" style="left:1153px;top:179px;width:8px;height:190px;background:#bdbdbd"></div>
<div class="a" style="left:26px;top:391px;width:999px;height:8px;background:#bdbdbd"></div>
<svg class="a" style="left:1154px;top:74px" width="7" height="4" viewBox="0 0 7 4"><path d="M0 3.5L3.5 0L7 3.5z" fill="#808080"/></svg>
<svg class="a" style="left:1154px;top:376px" width="7" height="4" viewBox="0 0 7 4"><path d="M0 0L3.5 3.5L7 0z" fill="#808080"/></svg>
<svg class="a" style="left:15px;top:392px" width="4" height="7" viewBox="0 0 4 7"><path d="M4 0L0.5 3.5L4 7z" fill="#808080"/></svg>
<svg class="a" style="left:1138px;top:392px" width="4" height="7" viewBox="0 0 4 7"><path d="M0 0L3.5 3.5L0 7z" fill="#808080"/></svg>
<div class="a" style="left:1165px;top:65px;width:1px;height:339px;background:#d8d8d8"></div>
<div class="a" style="left:8px;top:403px;width:1158px;height:1px;background:#d8d8d8"></div>
</body></html>
